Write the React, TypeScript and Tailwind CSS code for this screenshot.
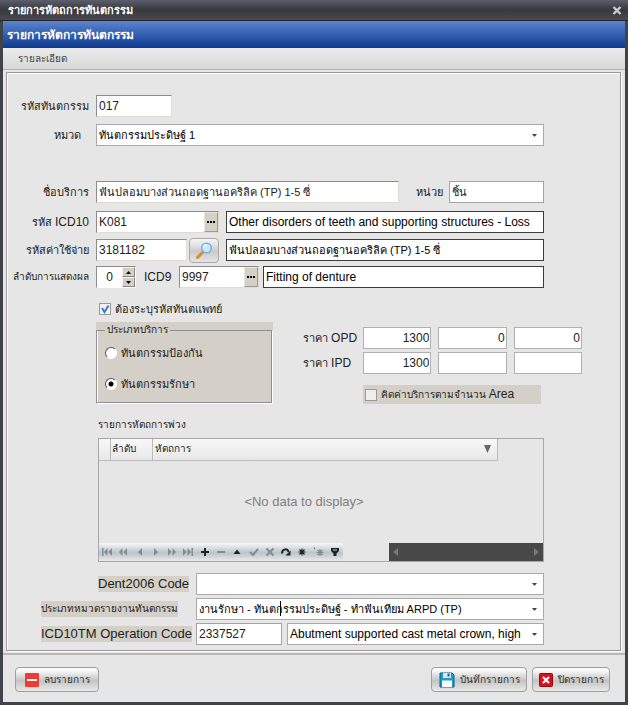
import React from "react";

const text = "font-['Liberation_Sans','Noto_Sans',sans-serif]";
const sunken = "h-[22px] min-w-0 border border-[#8c8c8c] border-r-[#e0dcd0] border-b-[#e0dcd0] bg-white px-[2px] text-[#222] outline-none";
const flat = "h-[22px] min-w-0 border border-[#a3a3a3] bg-white px-[2px] text-[#222] outline-none";
const readonlyBox = "h-[22px] min-w-0 border border-[#3c3c3c] bg-white px-[2px] text-black outline-none";
const sideLabel = "flex w-[82px] shrink-0 items-center justify-end whitespace-nowrap";
const footButton =
  "flex h-[25px] items-center justify-center gap-[5px] rounded-sm border border-[#a0a0a0] bg-linear-to-b from-[#fafafa] from-10% via-[#c4c4c4] via-55% to-[#e9e9e9] text-[10px] whitespace-nowrap text-[#333]";

function Combo({ id, value, label, caret, size = "text-[11px]", className = "" }: { id?: string; value: string; label?: string; caret?: boolean; size?: string; className?: string }) {
  return (
    <div className={`relative h-[22px] min-w-0 ${size} ${className}`}>
      <select id={id} aria-label={label} defaultValue={value} className="h-full w-full appearance-none border border-[#a9a9a9] bg-white pr-[16px] pl-[2px] text-black outline-none">
        <option value={value}>{value}</option>
      </select>
      {caret && <i className="pointer-events-none absolute top-[3px] left-[84px] h-[15px] w-px bg-black" />}
      <svg className="pointer-events-none absolute top-[10px] right-[7px]" width="5" height="3" viewBox="0 0 5 3">
        <path d="M0 0h5L3 2.500h-1z" fill="#444" />
      </svg>
    </div>
  );
}

function CodeField({ id, value, className }: { id: string; value: string; className: string }) {
  return (
    <div className={`flex h-[22px] shrink-0 border border-[#8c8c8c] border-r-[#e0dcd0] border-b-[#e0dcd0] bg-white ${className}`}>
      <input id={id} defaultValue={value} className="h-full min-w-0 flex-1 bg-transparent px-[2px] text-[12px] text-[#222] outline-none" />
      <button aria-label="..." className="flex h-[20px] w-[14px] items-center justify-center gap-px border border-[#e8e5dc] border-r-[#999] border-b-[#999] bg-[#d4d0c8]">
        <i className="size-[2px] bg-black" />
        <i className="size-[2px] bg-black" />
        <i className="size-[2px] bg-black" />
      </button>
    </div>
  );
}

function Radio({ label, checked }: { label: string; checked?: boolean }) {
  return (
    <label className="flex h-4 items-center gap-1">
      <input
        type="radio"
        name="service"
        defaultChecked={checked}
        className="size-3 appearance-none rounded-full border border-[#555] border-r-white border-b-white bg-white checked:bg-[radial-gradient(circle,#000_0_2px,#fff_3px)]"
      />
      {label}
    </label>
  );
}

function PriceRow({ label, values }: { label: string; values: string[] }) {
  const name = `ราคา ${label}`;
  return (
    <div className="flex items-center">
      <span className="w-[60px] shrink-0 whitespace-nowrap">
        ราคา <span className="text-[12px]">{label}</span>
      </span>
      <div className="flex min-w-0 flex-1 gap-[7px]">
        {values.map((v, i) => (
          <input key={i} aria-label={`${name} ${i + 1}`} defaultValue={v} className="h-[22px] w-0 min-w-0 flex-1 border border-[#b0b0b0] bg-white px-px text-right text-[12px] text-[#222] outline-none" />
        ))}
      </div>
    </div>
  );
}

const navIcons: { name: string; on?: boolean; d: React.ReactNode }[] = [
  { name: "First", d: <path d="M1 2h1.500v8H1zM6.500 2v8L3 6zM11 2v8L7.500 6z" /> },
  { name: "Prior page", d: <path d="M5.500 2v8L2 6zM10 2v8L6.500 6z" /> },
  { name: "Prior", d: <path d="M8 2v8L4 6z" /> },
  { name: "Next", d: <path d="M4 2v8l4-4z" /> },
  { name: "Next page", d: <path d="M2 2v8l3.500-4zM6.500 2v8L10 6z" /> },
  { name: "Last", d: <path d="M1 2v8l3.500-4zM5.500 2v8L9 6zM9.500 2H11v8H9.500z" /> },
  { name: "Insert", on: true, d: <path d="M5 2h2v3h3v2H7v3H5V7H2V5h3z" /> },
  { name: "Delete", d: <path d="M2 5h8v2H2z" /> },
  { name: "Edit", on: true, d: <path d="M6 3.500L9.500 8h-7z" /> },
  { name: "Post", d: <path d="M2 6l3 3 5-6" fill="none" stroke="currentColor" strokeWidth="2" /> },
  { name: "Cancel", d: <path d="M2.500 2.500l7 7M9.500 2.500l-7 7" fill="none" stroke="currentColor" strokeWidth="2" /> },
  {
    name: "Refresh",
    on: true,
    d: (
      <>
        <path d="M2 7.500C2 2.500 8 2 8.500 6" fill="none" stroke="currentColor" strokeWidth="2" />
        <path d="M5.500 9.500H10.500V4.500z" />
      </>
    ),
  },
  { name: "Save bookmark", on: true, d: <path d="M6 2.500v7M2.500 6h7M3.500 3.500l5 5M8.500 3.500l-5 5" fill="none" stroke="currentColor" strokeWidth="1.100" /> },
  { name: "Goto bookmark", d: <path d="M7 3v7M3.500 6.500h7M4.500 4l5 5M9.500 4l-5 5M1.500 1v2.500" fill="none" stroke="currentColor" strokeWidth="1.200" /> },
  { name: "Filter", on: true, d: <path d="M2 2h8v3L7.500 7.500V10h-3V7.500L2 5zM4 3.500v1h4v-1z" fillRule="evenodd" /> },
];

export default function App() {
  return (
    <div className={`${text} flex min-h-screen flex-col bg-[#3f434a] px-[3px] pb-[3px] text-[11px] leading-4 text-[#222]`}>
      <header className="-mx-[3px] flex h-[21px] items-center justify-between border-b border-[#24262b] bg-linear-to-b from-[#5c5e6c] via-[#36383c] via-50% to-[#484a50] pr-[6px] pl-2 font-bold text-white">
        <span>รายการหัตถการทันตกรรม</span>
        <button aria-label="Close window">
          <svg width="10" height="9" viewBox="0 0 10 9">
            <path d="M1.500 1l7 7M8.500 1l-7 7" stroke="#c5ccd8" strokeWidth="2.400" />
          </svg>
        </button>
      </header>
      <h1 className="flex h-[27px] items-center bg-linear-to-b from-[#5b83cf] to-[#0c3a91] pl-1 text-[12px] font-bold text-white">รายการหัตการทันตกรรม</h1>

      <main className="flex flex-1 flex-col bg-[#e6e6e6]">
        <nav className="flex h-[22px] items-center border-b border-[#b4b4b4] bg-linear-to-b from-[#ebebeb] to-[#d8d8d8] pl-[15px]">
          <button className="text-[10px] text-[#444]">รายละเอียด</button>
        </nav>

        <form className="mt-[2px] mr-1 ml-[3px] border border-[#999] pt-[22px] pb-[5px] shadow-[inset_1px_1px_#fff,1px_1px_#fff]" onSubmit={(e) => e.preventDefault()}>
          <div className="pr-[76px]">
            <div className="flex items-center gap-[7px]">
              <label htmlFor="code" className={sideLabel}>รหัสทันตกรรม</label>
              <input id="code" defaultValue="017" className={`${sunken} w-[76px] text-[12px]`} />
            </div>
            <div className="mt-[7px] flex items-center gap-[7px]">
              <label htmlFor="group" className={`${sideLabel} pr-2`}>หมวด</label>
              <Combo id="group" value="ทันตกรรมประดิษฐ์  1" className="flex-1" />
            </div>
            <div className="mt-[35px] flex items-center gap-[7px]">
              <label htmlFor="name" className={sideLabel}>ชื่อบริการ</label>
              <input id="name" defaultValue="ฟันปลอมบางส่วนถอดฐานอคริลิค (TP) 1-5 ซี่" className={`${sunken} flex-1`} />
              <label htmlFor="unit" className="ml-[10px] w-[26px] whitespace-nowrap">หน่วย</label>
              <input id="unit" defaultValue="ชิ้น" className={`${flat} w-[95px]`} />
            </div>
            <div className="mt-2 flex items-center gap-[7px]">
              <label htmlFor="icd10" className={sideLabel}>
                รหัส&nbsp;<span className="text-[12px]">ICD10</span>
              </label>
              <CodeField id="icd10" value="K081" className="w-[123px]" />
              <input aria-label="ICD10 name" readOnly value="Other disorders of teeth and supporting structures - Loss" className={`${readonlyBox} flex-1 text-[12px]`} />
            </div>
            <div className="mt-[6px] flex h-[22px] items-center gap-[7px]">
              <label htmlFor="cost" className={sideLabel}>รหัสค่าใช้จ่าย</label>
              <div className="flex w-[123px] shrink-0 items-center gap-[2px]">
                <input id="cost" defaultValue="3181182" className={`${sunken} flex-1 text-[12px]`} />
                <button aria-label="Search" className="flex h-[25px] w-[30px] shrink-0 items-center justify-center rounded-sm border border-[#aaa] bg-linear-to-b from-[#f6f6f6] via-[#cbcbcb] via-55% to-[#e4e4e4]">
                  <svg width="17" height="17" viewBox="0 0 17 17">
                    <path d="M1.500 15.500L7 10" stroke="#e08a2c" strokeWidth="3" strokeLinecap="round" />
                    <circle cx="10.500" cy="6" r="4.800" fill="#c5eaff" stroke="#6fb0e6" strokeWidth="1.500" />
                    <path d="M7.500 5.500a3 3 0 0 1 3-2.500" stroke="#fff" strokeWidth="1.500" fill="none" />
                  </svg>
                </button>
              </div>
              <input aria-label="Cost item name" readOnly value="ฟันปลอมบางส่วนถอดฐานอคริลิค (TP) 1-5 ซี่" className={`${readonlyBox} flex-1`} />
            </div>
            <div className="mt-[5px] flex items-center">
              <label htmlFor="order" className={`${sideLabel} mr-[7px] text-[10px]`}>ลำดับการแสดงผล</label>
              <div className="flex h-[22px] w-10 shrink-0 border border-[#8c8c8c] border-r-white border-b-white bg-white">
                <input id="order" defaultValue="0" className="w-0 min-w-0 flex-1 text-center text-[12px] outline-none" />
                <div className="flex w-[13px] flex-col bg-[#d4d0c8]">
                  <button aria-label="Increase" className="flex flex-1 items-center justify-center border border-[#f4f2ee] border-r-[#888] border-b-[#888]">
                    <svg width="5" height="3"><path d="M0 3h5L2.500 0z" /></svg>
                  </button>
                  <button aria-label="Decrease" className="flex flex-1 items-center justify-center border border-[#f4f2ee] border-r-[#888] border-b-[#888]">
                    <svg width="5" height="3"><path d="M0 0h5L2.500 3z" /></svg>
                  </button>
                </div>
              </div>
              <label htmlFor="icd9" className="mr-[5px] ml-2 w-[30px] shrink-0 text-[12px]">ICD9</label>
              <CodeField id="icd9" value="9997" className="mr-1 w-[80px]" />
              <input aria-label="ICD9 name" readOnly value="Fitting of denture" className={`${readonlyBox} flex-1 text-[12px]`} />
            </div>
            <label className="mt-[13px] ml-[92px] flex h-4 w-fit items-center gap-1">
              <span className="relative size-3">
                <input type="checkbox" defaultChecked className="block size-3 appearance-none border border-[#999] bg-[#f2f2f2]" />
                <svg className="pointer-events-none absolute inset-0" width="12" height="12" viewBox="0 0 12 12">
                  <path d="M3 5l2.500 4L9.500 2.500" fill="none" stroke="#3b7fcc" strokeWidth="2" />
                </svg>
              </span>
              ต้องระบุรหัสทันตแพทย์
            </label>
          </div>

          <div className="mt-[5px] mr-[38px] ml-[89px] flex h-[82px] items-start">
            <div className="h-full w-[177px] shrink-0 bg-[#d4d0c8]">
              <fieldset className="mr-px h-[81px] border border-[#8f8f8f] px-2 shadow-[inset_1px_0_#fff,1px_1px_#fff]">
                <legend className="h-4 px-[2px] text-[10px]">ประเภทบริการ</legend>
                <div className="flex flex-col gap-[15px] pt-[7px]">
                  <Radio label="ทันตกรรมป้องกัน" />
                  <Radio label="ทันตกรรมรักษา" checked />
                </div>
              </fieldset>
            </div>
            <div className="ml-[30px] flex min-w-0 flex-1 flex-col gap-[3px] pt-[5px]">
              <PriceRow label="OPD" values={["1300", "0", "0"]} />
              <PriceRow label="IPD" values={["1300", "", ""]} />
              <label className="mt-2 mr-[41px] ml-[60px] flex h-[19px] items-center gap-1 bg-[#d4d0c8] pl-[2px] text-[10px] whitespace-nowrap">
                <input type="checkbox" className="size-3 appearance-none border border-[#999] bg-[#eee]" />
                <span>
                  คิดค่าบริการตามจำนวน <span className="text-[12px]">Area</span>
                </span>
              </label>
            </div>
          </div>

          <div className="mt-[13px] mr-[76px] ml-[91px] text-[10px]">
            <h2>รายการหัตถการพ่วง</h2>
            <section className="mt-[5px] flex h-[124px] flex-col border border-[#a8a8a8]">
              <table className="mr-[45px] table-fixed border-collapse">
                <thead>
                  <tr className="h-[21px] bg-linear-to-b from-[#f8f8f8] to-[#e8e8e8] text-left">
                    <th aria-label="Marker" className="w-[11px] border-r border-b border-[#bbb]" />
                    <th className="w-[42px] border-r border-b border-[#bbb] pl-px font-normal">ลำดับ</th>
                    <th className="border-r border-b border-[#bbb] pr-[6px] pl-[2px] font-normal">
                      <span className="flex items-center justify-between">
                        หัตถการ
                        <svg width="7" height="8"><path d="M0 0h7L3.500 8z" fill="#666" /></svg>
                      </span>
                    </th>
                  </tr>
                </thead>
              </table>
              <p className="flex flex-1 items-center justify-center pr-[34px] text-[13px] text-[#808080]">&lt;No data to display&gt;</p>
              <div className="flex h-[18px] justify-between">
                <div className="flex w-[244px] shrink-0 items-center justify-around bg-linear-to-b from-[#f8f8f8] via-[#b9c4cc] via-55% to-[#e6eaec]">
                  {navIcons.map((n) => (
                    <button key={n.name} type="button" aria-label={n.name} className={n.on ? "text-[#222]" : "text-[#858b90]"}>
                      <svg width="12" height="12" viewBox="0 0 12 12" fill="currentColor">{n.d}</svg>
                    </button>
                  ))}
                </div>
                <div className="flex w-[154px] items-center justify-between bg-[#484848] px-1">
                  <svg width="5" height="8"><path d="M5 0v8L0 4z" fill="#777" /></svg>
                  <svg width="5" height="8"><path d="M0 0v8l5-4z" fill="#777" /></svg>
                </div>
              </div>
            </section>
          </div>

          <div className="mt-[11px] mr-[76px] ml-[34px] flex flex-col gap-[3px] text-[13px]">
            <div className="flex items-center">
              <div className="w-[155px] shrink-0 pl-[57px]">
                <label htmlFor="dent" className="inline-block bg-[#d4d0c8] whitespace-nowrap">Dent2006 Code</label>
              </div>
              <Combo id="dent" value="" className="flex-1" />
            </div>
            <div className="flex items-center">
              <div className="flex w-[155px] shrink-0">
                <label htmlFor="report" className="bg-[#d4d0c8] text-[10px] whitespace-nowrap">ประเภทหมวดรายงานทันตกรรม</label>
              </div>
              <Combo id="report" value="งานรักษา - ทันตกรรมประดิษฐ์ - ทำฟันเทียม ARPD (TP)" caret className="flex-1" />
            </div>
            <div className="flex items-center">
              <div className="w-[155px] shrink-0">
                <label htmlFor="op" className="inline-block bg-[#d4d0c8] whitespace-nowrap">ICD10TM Operation Code</label>
              </div>
              <input id="op" defaultValue="2337527" className={`${flat} mr-[5px] w-[86px] text-[12px]`} />
              <Combo label="Operation" value="Abutment supported cast metal crown, high" size="text-[12px]" className="flex-1" />
            </div>
          </div>
        </form>

        <footer className="mt-[2px] flex flex-1 items-start border-t-2 border-[#b8b8b8] px-3 pt-3">
          <button className={`${footButton} w-[84px]`}>
            <svg width="14" height="14" viewBox="0 0 14 14">
              <rect width="14" height="14" rx="1" fill="#f03a36" />
              <path d="M2 7h10" stroke="#fff" strokeWidth="2" />
            </svg>
            ลบรายการ
          </button>
          <button className={`${footButton} mr-[5px] ml-auto w-[96px]`}>
            <svg width="16" height="16" viewBox="0 0 16 16">
              <path d="M1 1h12l2 2v12H1z" fill="#199bd0" stroke="#0c5f8c" />
              <path d="M4 1h8v5H4z" fill="#dbe9ef" />
              <path d="M8.500 1.500h2v3h-2z" fill="#24556e" />
              <path d="M3 8.500h10V15H3z" fill="#fff" />
            </svg>
            บันทึกรายการ
          </button>
          <button className={`${footButton} mr-[3px] w-[78px]`}>
            <svg width="14" height="14" viewBox="0 0 14 14">
              <rect x=".5" y=".5" width="13" height="13" rx="1" fill="#d8121c" stroke="#8c0a10" />
              <path d="M4 4l6 6M10 4l-6 6" stroke="#fff" strokeWidth="2" />
            </svg>
            ปิดรายการ
          </button>
        </footer>
      </main>
    </div>
  );
}
